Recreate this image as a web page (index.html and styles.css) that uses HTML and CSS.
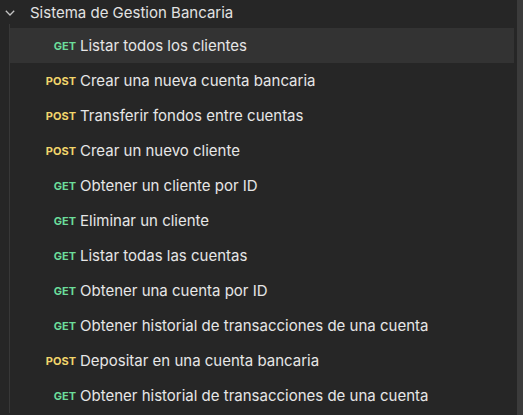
FILE: index.html
```html
<!DOCTYPE html>
<html lang="es">
<head>
<meta charset="utf-8">
<link rel="stylesheet" href="styles.css">
</head>
<body>
<div class="shell">
  <div class="tree">
    <div class="folder">
      <svg class="chev" width="10" height="6" viewBox="0 0 10 6"><path d="M0.8 0.8 L5 5 L9.2 0.8" fill="none" stroke="#c4c4c4" stroke-width="1.3"/></svg>
      <span class="folder-name">Sistema de Gestion Bancaria</span>
    </div>
    <div class="children">
      <div class="row selected"><span class="m get">GET</span><span class="t">Listar todos los clientes</span></div>
      <div class="row"><span class="m post">POST</span><span class="t">Crear una nueva cuenta bancaria</span></div>
      <div class="row"><span class="m post">POST</span><span class="t">Transferir fondos entre cuentas</span></div>
      <div class="row"><span class="m post">POST</span><span class="t">Crear un nuevo cliente</span></div>
      <div class="row"><span class="m get">GET</span><span class="t">Obtener un cliente por ID</span></div>
      <div class="row"><span class="m get">GET</span><span class="t">Eliminar un cliente</span></div>
      <div class="row"><span class="m get">GET</span><span class="t">Listar todas las cuentas</span></div>
      <div class="row"><span class="m get">GET</span><span class="t">Obtener una cuenta por ID</span></div>
      <div class="row"><span class="m get">GET</span><span class="t">Obtener historial de transacciones de una cuenta</span></div>
      <div class="row"><span class="m post">POST</span><span class="t">Depositar en una cuenta bancaria</span></div>
      <div class="row"><span class="m get">GET</span><span class="t">Obtener historial de transacciones de una cuenta</span></div>
    </div>
  </div>
  <div class="scrollbar"></div>
</div>
</body>
</html>
```
FILE: styles.css
```css
html, body {
  margin: 0;
  padding: 0;
  background: #262626;
  height: 100%;
  overflow: hidden;
}
body {
  font-family: Inter, "Noto Sans", sans-serif;
  color: #e6e6e6;
}
.shell {
  display: flex;
  height: 415px;
  gap: 3px;
}
.tree {
  width: 514px;
  flex: none;
  overflow: hidden;
}
.scrollbar {
  width: 6px;
  background: #3b3b3b;
}
.folder {
  height: 24px;
  display: flex;
  align-items: center;
}
.chev {
  margin-left: 5px;
  margin-top: 1px;
  flex: none;
}
.folder-name {
  margin-left: 15px;
  font-size: 15px;
  color: #e2e2e2;
}
.children {
  margin-left: 9px;
  padding-top: 4px;
  border-left: 1px solid #383838;
}
.row {
  height: 35px;
  display: flex;
  align-items: center;
}
.row.selected {
  background: #333333;
}
.m {
  width: 32px;
  margin-left: 34px;
  text-align: right;
  font-size: 11px;
  font-weight: 700;
  flex: none;
}
.get { color: #6bdd9a; }
.post { color: #f2d56b; }
.t {
  margin-left: 4px;
  font-size: 15px;
  white-space: nowrap;
}
```
